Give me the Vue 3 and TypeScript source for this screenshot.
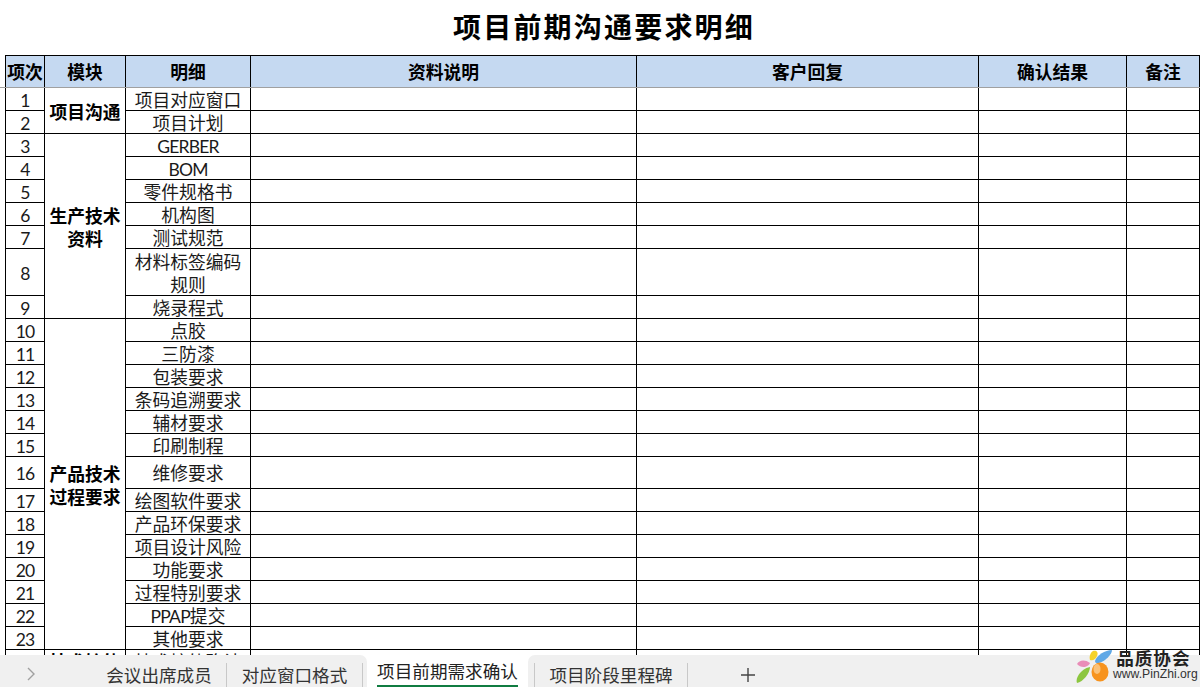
<script setup lang="ts">
interface Row { no: string; detail: string; h: number; mod?: string; span?: number }
interface Seg { text: string; latin: boolean }

const raw: Array<[string, number, string?, number?]> = [
  ['项目对应窗口', 23, '项目沟通', 2],
  ['项目计划', 23],
  ['GERBER', 23, '生产技术\n资料', 7],
  ['BOM', 23],
  ['零件规格书', 23],
  ['机构图', 23],
  ['测试规范', 23],
  ['材料标签编码\n规则', 47],
  ['烧录程式', 23],
  ['点胶', 23, '产品技术\n过程要求', 14],
  ['三防漆', 23],
  ['包装要求', 23],
  ['条码追溯要求', 23],
  ['辅材要求', 23],
  ['印刷制程', 23],
  ['维修要求', 32],
  ['绘图软件要求', 23],
  ['产品环保要求', 23],
  ['项目设计风险', 23],
  ['功能要求', 23],
  ['过程特别要求', 23],
  ['PPAP提交', 23],
  ['其他要求', 23],
]
const rows: Row[] = raw.map((r, i) => ({ no: String(i + 1), detail: r[0], h: r[1], mod: r[2], span: r[3] }))
rows.push({ no: '24', detail: '技术接轨确认', h: 23, mod: '技术接轨', span: 1 })
const heads = ['项次', '模块', '明细', '资料说明', '客户回复', '确认结果', '备注']
const widths = [39, 81, 125, 386, 342, 148, 73]

function segs(s: string): Seg[] {
  return s
    .split(/([A-Za-z0-9]+)/)
    .filter((t) => t.length > 0)
    .map((t) => ({ text: t, latin: /^[A-Za-z0-9]+$/.test(t) }))
}
</script>

<template>
  <div class="page">
    <main class="sheet">
      <h1 class="title">项目前期沟通要求明细</h1>
      <table class="grid">
        <colgroup>
          <col v-for="(w, i) in widths" :key="i" :style="{ width: w + 'px' }" />
        </colgroup>
        <thead>
          <tr>
            <th v-for="h in heads" :key="h">{{ h }}</th>
          </tr>
        </thead>
        <tbody>
          <tr v-for="r in rows" :key="r.no" :style="{ height: r.h + 'px' }">
            <td><div class="in" :class="{ mid: r.h === 32 }"><span class="latin">{{ r.no }}</span></div></td>
            <td v-if="r.span" :rowspan="r.span"><div class="in mod">{{ r.mod }}</div></td>
            <td>
              <div class="in" :class="{ mid: r.h === 32 }">
                <span v-for="(s, i) in segs(r.detail)" :key="i" :class="{ latin: s.latin }">{{ s.text }}</span>
              </div>
            </td>
            <td></td><td></td><td></td><td></td>
          </tr>
        </tbody>
      </table>
    </main>
    <footer class="tabbar">
      <div class="group left">
        <span class="chev">
          <svg width="10" height="16" viewBox="0 0 10 16"><path d="M2 2l6 6-6 6" fill="none" stroke="#a0a0a0" stroke-width="1.4" /></svg>
        </span>
        <span class="tab t0">会议出席成员</span>
        <span class="tab t1">对应窗口格式</span>
      </div>
      <div class="active"><span class="active-label">项目前期需求确认</span></div>
      <div class="group right">
        <span class="tab t3">项目阶段里程碑</span>
        <span class="plus">
          <svg width="14" height="14" viewBox="0 0 14 14"><path d="M7 0v14M0 7h14" stroke="#444" stroke-width="1.4" /></svg>
        </span>
      </div>
      <div class="logo">
        <svg width="38" height="35" viewBox="0 0 38 35">
          <path d="M20 12 C 22 6 30 1 37 1 C 37 5 31 12 24 14 C 22 14.500 20 14 20 12 Z" fill="#5fa8e6" />
          <path d="M18 2 C 21 1 24 3 22 7 C 21 10 18 12 15 11 C 14 8 15 4 18 2 Z" fill="#f4d22a" />
          <path d="M2 15 C 4 11 10 10 15 14 C 14 18 6 20 2 15 Z" fill="#e98db8" />
          <path d="M15 18 C 15 24 8 33 2 34 C 0 30 5 20 15 18 Z" fill="#8cc63f" />
          <ellipse cx="25" cy="23" rx="8.500" ry="9.500" fill="#f7931e" />
          <ellipse cx="22" cy="20" rx="3.500" ry="5" fill="#fbc27a" />
        </svg>
        <div class="logo-text">
          <span class="logo-cn">品质协会</span>
          <span class="logo-en">www.PinZhi.org</span>
        </div>
      </div>
    </footer>
  </div>
</template>

<style>
html, body { margin: 0; background: #fff; overflow: hidden; }
</style>

<style scoped>
.page {
  width: 1200px;
  height: 687px;
  display: flex;
  flex-direction: column;
  overflow: hidden;
  font-family: "Noto Sans CJK SC", "Liberation Sans", sans-serif;
  color: #111;
}
.sheet { position: relative; height: 655px; overflow: hidden; padding-left: 5px; flex: none; }
.sheet::before { content: ""; position: absolute; left: 0; top: 87px; width: 5px; height: 1px; background: #a0a0a0; }
.title {
  margin: 0;
  height: 55px;
  line-height: 52px;
  width: 1198px;
  text-align: center;
  font-size: 28px;
  font-weight: 700;
  letter-spacing: 2.2px;
  color: #000;
}
.grid {
  table-layout: fixed;
  border-collapse: collapse;
  width: 1194px;
  font-size: 17.8px;
  color: #1a1a1a;
}
th, td {
  border: 1px solid #000;
  padding: 0;
  text-align: center;
  vertical-align: middle;
}
th {
  height: 32px;
  line-height: 29px;
  padding-bottom: 1px;
  box-sizing: border-box;
  background: #c5d9f1;
  font-weight: 700;
  border-bottom-color: #a0a0a0;
  color: #000;
}
.in {
  white-space: pre-line;
  line-height: 23px;
  margin-bottom: -1px;
}
.in.mid { margin-top: -1px; margin-bottom: 0; }
.latin { font-family: Lato, "Noto Sans CJK SC", sans-serif; font-size: 17.5px; letter-spacing: -0.8px; line-height: 1; }
.mod { font-weight: 700; color: #000; }
.tabbar { flex: 1; position: relative; display: flex; align-items: stretch; color: #333; font-size: 17.6px; }
.group { display: flex; background: #f0f0f0; }
.left { width: 367px; border-top-right-radius: 7px; }
.right { flex: 1; border-top-left-radius: 7px; padding-left: 6px; }
.chev { width: 92px; display: flex; align-items: center; padding-left: 26px; box-sizing: border-box; margin-top: 6px; }
.tab { display: flex; align-items: center; justify-content: center; white-space: nowrap; margin-top: 8px; box-sizing: border-box; border-right: 1px solid #c8c8c8; line-height: 24px; }
.t0 { width: 135px; }
.t1 { width: 136px; }
.t3 { width: 154px; border-left: 1px solid #c8c8c8; }
.active { width: 161px; display: flex; justify-content: center; align-items: flex-end; color: #222; }
.active-label { border-bottom: 2.5px solid #107c41; line-height: 28px; height: 30px; box-sizing: border-box; white-space: nowrap; }
.plus { width: 120px; display: flex; align-items: center; justify-content: center; margin-top: 8px; }
.logo { position: absolute; left: 1075px; top: -6px; display: flex; align-items: flex-start; }
.logo-text { display: flex; flex-direction: column; align-items: center; }
.logo-cn { font-weight: 700; font-size: 17.6px; letter-spacing: 1px; color: #222; line-height: 18px; margin-right: 4px; }
.logo-en { font-family: "Liberation Sans", sans-serif; font-size: 12.2px; color: #333; line-height: 15px; white-space: nowrap; }
</style>
